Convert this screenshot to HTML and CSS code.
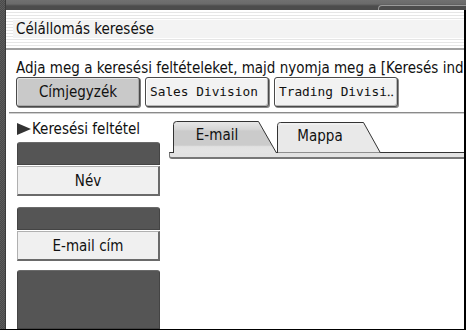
FILE: index.html
```html
<!DOCTYPE html>
<html lang="hu">

<head>
    <meta charset="UTF-8">
    <meta name="viewport" content="width=device-width, initial-scale=1.0">
    <title>Célállomás keresése</title>
    <link rel="stylesheet" href="styles.css">
</head>

<body>
    <div class="screen">
        <div class="edge"></div>
        <div class="main">
            <div class="topbar">
                <span class="topbar-tab"></span>
            </div>
            <div class="panel">
                <div class="titlebar">
                    <div class="title-band">Célállomás keresése</div>
                </div>
                <p class="hint">Adja meg a keresési feltételeket, majd nyomja meg a [Keresés indítása] gombot.</p>
                <div class="lists">
                    <button class="list-btn is-active">Címjegyzék</button>
                    <button class="list-btn mono">Sales Division</button>
                    <button class="list-btn mono">Trading Divisi‥</button>
                </div>
                <div class="rule"></div>
                <div class="search">
                    <div class="criteria">
                        <div class="criteria-head">
                            <svg class="arrow" width="14" height="12" viewBox="0 0 14 12">
                                <path d="M0 0 L14 6 L0 12 Z" fill="#333" />
                            </svg>
                            Keresési feltétel
                        </div>
                        <div class="field-value"></div>
                        <button class="field-btn">Név</button>
                        <div class="field-value second"></div>
                        <button class="field-btn">E-mail cím</button>
                        <div class="field-value big"></div>
                    </div>
                    <div class="tabs-area">
                        <div class="tabs">
                            <div class="tab is-active">
                                <svg width="105" height="32" viewBox="0 0 105 32">
                                    <defs>
                                        <linearGradient id="tabOn" x1="0" y1="0" x2="0" y2="1">
                                            <stop offset="0" stop-color="#e8e8e8" />
                                            <stop offset="0.25" stop-color="#d6d6d6" />
                                            <stop offset="0.3" stop-color="#cbcbcb" />
                                            <stop offset="0.75" stop-color="#cbcbcb" />
                                            <stop offset="0.8" stop-color="#e2e2e2" />
                                            <stop offset="1" stop-color="#e4e4e4" />
                                        </linearGradient>
                                    </defs>
                                    <path d="M0.5 32 V3.5 Q0.5 0.5 3.5 0.5 H85.5 L103.5 32 Z" fill="url(#tabOn)" />
                                    <path d="M0.5 32 V3.5 Q0.5 0.5 3.5 0.5 H85.5 L103.5 32" fill="none" stroke="#333" />
                                </svg>
                                <span class="tab-label">E-mail</span>
                            </div>
                            <div class="tab">
                                <svg width="105" height="31" viewBox="0 0 105 31">
                                    <path d="M0.5 31 V3.5 Q0.5 0.5 3.5 0.5 H86.5 L103.5 31 Z" fill="#e9e9e9" stroke="#333" />
                                    <path d="M1.5 2 H86" stroke="#f8f8f8" />
                                </svg>
                                <span class="tab-label">Mappa</span>
                            </div>
                        </div>
                        <div class="tab-base"></div>
                    </div>
                </div>
            </div>
        </div>
    </div>
</body>

</html>
```

FILE: styles.css
```css
* {
    margin: 0;
    padding: 0;
    box-sizing: border-box;
}

body {
    width: 466px;
    height: 330px;
    overflow: hidden;
    background-color: #fff;
    font-family: "DejaVu Sans Condensed", "DejaVu Sans", sans-serif;
    font-stretch: condensed;
    font-size: 15px;
    line-height: 18px;
    color: #111;
}

/* Whole screen */
.screen {
    display: flex;
    height: 330px;
    border-bottom: 1px solid #000;
}

.edge {
    width: 6px;
    flex-shrink: 0;
    background-color: #555;
    background-image: repeating-conic-gradient(#4a4a4a 0 25%, #5c5c5c 0 50%);
    background-size: 2px 2px;
    border-right: 1px solid #3a3a3a;
}

.main {
    flex: 1;
    display: flex;
    flex-direction: column;
    min-width: 0;
}

.topbar {
    height: 10px;
    display: flex;
    align-items: flex-end;
    background: linear-gradient(to bottom, #707070 0, #6a6a6a 4px, #5a5a5a 5px, #4c4c4c 6px, #4c4c4c 10px);
}

.topbar-tab {
    margin-left: auto;
    width: 88px;
    height: 5px;
    border-top: 1px solid #9a9a9a;
    border-left: 1px solid #9a9a9a;
    border-top-left-radius: 4px;
}

.panel {
    flex: 1;
    display: flex;
    flex-direction: column;
    min-height: 0;
    border-right: 2px solid #000;
    overflow: hidden;
}

.titlebar {
    height: 40px;
    padding-top: 10px;
    background: repeating-linear-gradient(to bottom, #fff 0 2px, #e6e6e6 2px 3px);
    border-bottom: 2px solid #a0a0a0;
}

.title-band {
    margin-left: 7px;
    height: 18px;
    padding-left: 3px;
    background-color: #f3f3f3;
    white-space: nowrap;
}

.hint {
    margin: 9px 0 0 10px;
    white-space: nowrap;
}

/* Address book buttons */
.lists {
    display: flex;
    gap: 5px;
    margin-left: 10px;
}

.list-btn {
    width: 124px;
    height: 30px;
    padding: 0 4px;
    background-color: #f2f2f2;
    border: 1px solid #4a4a4a;
    border-radius: 3px;
    box-shadow: inset 1px 1px 0 #fff, inset -1px -1px 0 #b8b8b8, 1px 1px 0 #888;
    font: inherit;
    color: #111;
    white-space: nowrap;
    overflow: hidden;
}

.list-btn.is-active {
    background-color: #c9c9c9;
    box-shadow: inset 1px 1px 0 #e6e6e6, inset -1px -1px 0 #a8a8a8, 1px 1px 0 #777;
}

.mono {
    font-family: "DejaVu Sans Mono", monospace;
    font-size: 12.8px;
    text-align: left;
    padding: 0 2px 0 4px;
}

.rule {
    margin: 5px 0 0 3px;
    height: 2px;
    border-top: 1px solid #8a8a8a;
    border-bottom: 1px solid #d0d0d0;
}

/* Search area */
.search {
    flex: 1;
    display: flex;
    min-height: 0;
}

.criteria {
    width: 143px;
    margin-left: 11px;
    display: flex;
    flex-direction: column;
}

.criteria-head {
    display: flex;
    align-items: center;
    gap: 1px;
    margin-top: 6px;
    height: 18px;
    white-space: nowrap;
}

.arrow {
    flex-shrink: 0;
}

.field-value {
    height: 23px;
    margin-top: 4px;
    background-color: #555;
    border: 1px solid #444;
    border-top-color: #6a6a6a;
    border-radius: 3px 3px 0 0;
}

.field-value.second {
    margin-top: 11px;
}

.field-value.big {
    flex: 1;
    margin-top: 9px;
}

.field-btn {
    height: 30px;
    margin-top: 1px;
    background-color: #f0f0f0;
    border-top: 1px solid #b0b0b0;
    border-left: 1px solid #b0b0b0;
    border-right: 2px solid #6a6a6a;
    border-bottom: 2px solid #6a6a6a;
    font: inherit;
    color: #111;
}

/* Tabs */
.tabs-area {
    flex: 1;
    margin-left: 9px;
    padding-top: 8px;
}

.tabs {
    display: flex;
    margin-left: 4px;
    margin-bottom: -1px;
    align-items: flex-end;
    height: 31px;
}

.tab {
    display: grid;
    width: 104px;
}

.tab svg,
.tab-label {
    grid-area: 1 / 1;
}

.tab svg {
    display: block;
    align-self: end;
}

.tab-label {
    width: 86px;
    padding-top: 5px;
    text-align: center;
}

.tab.is-active .tab-label {
    padding-top: 5px;
    padding-left: 2px;
}

.tab-base {
    height: 7px;
    background-color: #e2e2e2;
    border-top: 1px solid #333;
    border-bottom: 2px solid #777;
    border-left: 1px solid #777;
    border-radius: 0 0 0 3px;
}
```
